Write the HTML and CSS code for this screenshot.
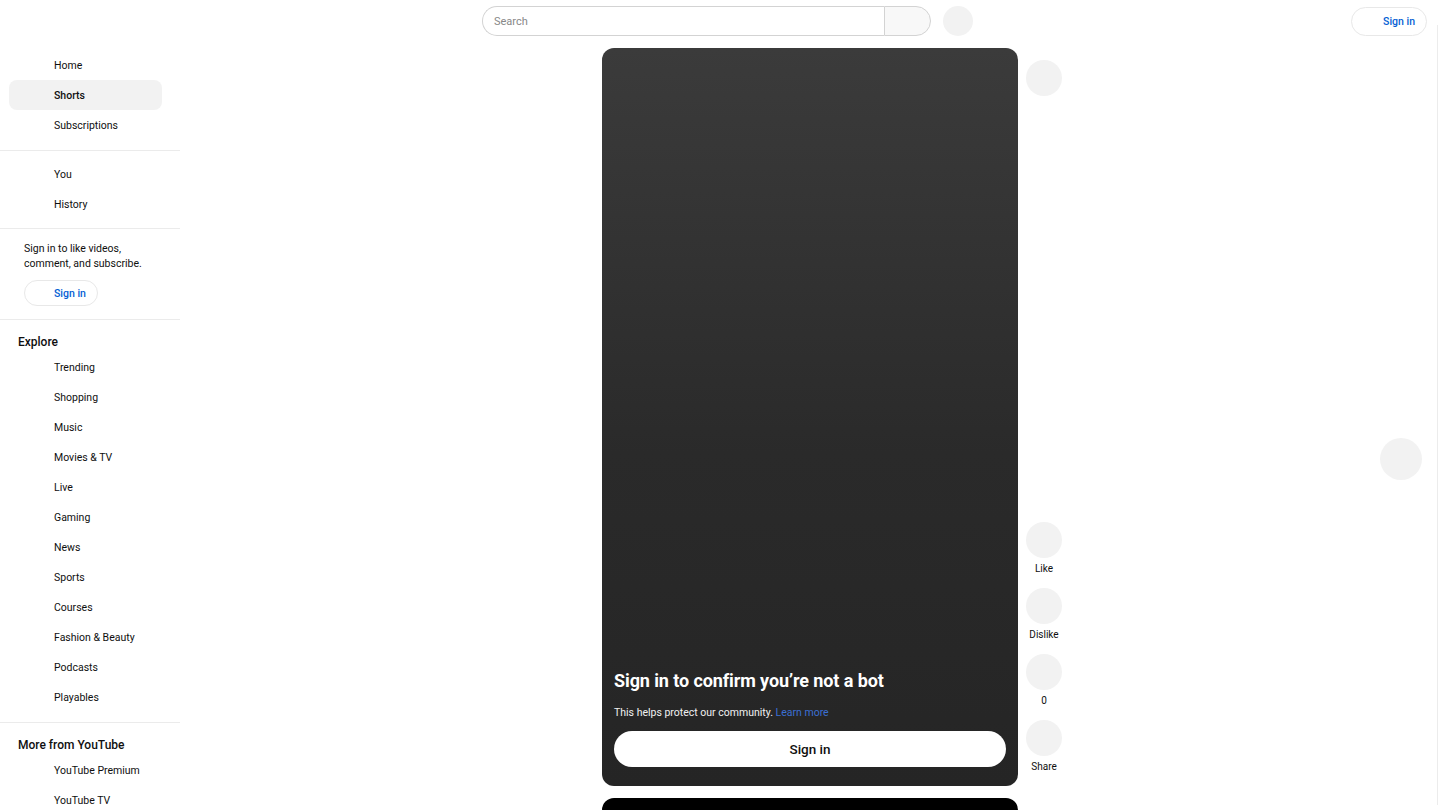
FILE: index.html
```html
<!DOCTYPE html>
<html lang="en">
<head>
  <meta charset="UTF-8" />
  <meta name="viewport" content="width=device-width, initial-scale=1" />
  <title>Shorts</title>
  <link rel="stylesheet" href="styles.css">
</head>
<body>
  <header class="topbar">
    <div class="topbar-start"></div>
    <div class="topbar-center">
      <div class="search">
        <input type="text" class="search-input" placeholder="Search" />
        <button class="search-btn" aria-label="Search"></button>
      </div>
      <button class="mic-btn" aria-label="Search with your voice"></button>
    </div>
    <div class="topbar-end">
      <button class="signin-btn">Sign in</button>
    </div>
  </header>

  <div class="layout">
    <nav class="sidebar">
      <div class="side-section first">
        <a class="side-item">Home</a>
        <a class="side-item active">Shorts</a>
        <a class="side-item">Subscriptions</a>
      </div>
      <div class="side-section">
        <a class="side-item">You</a>
        <a class="side-item">History</a>
      </div>
      <div class="side-section side-signin">
        <p>Sign in to like videos, comment, and subscribe.</p>
        <button class="signin-btn small">Sign in</button>
      </div>
      <div class="side-section explore">
        <h3 class="side-title">Explore</h3>
        <a class="side-item">Trending</a>
        <a class="side-item">Shopping</a>
        <a class="side-item">Music</a>
        <a class="side-item">Movies &amp; TV</a>
        <a class="side-item">Live</a>
        <a class="side-item">Gaming</a>
        <a class="side-item">News</a>
        <a class="side-item">Sports</a>
        <a class="side-item">Courses</a>
        <a class="side-item">Fashion &amp; Beauty</a>
        <a class="side-item">Podcasts</a>
        <a class="side-item">Playables</a>
      </div>
      <div class="side-section last">
        <h3 class="side-title">More from YouTube</h3>
        <a class="side-item">YouTube Premium</a>
        <a class="side-item">YouTube TV</a>
      </div>
    </nav>

    <main class="shorts">
      <div class="reel">
        <div class="reel-card">
          <div class="bot-check">
            <h2>Sign in to confirm you’re not a bot</h2>
            <p>This helps protect our community. <a href="#">Learn more</a></p>
            <button class="bot-signin">Sign in</button>
          </div>
        </div>
        <div class="actions">
          <div class="action">
            <span class="circle"></span>
          </div>
          <div class="action-group">
            <div class="action"><span class="circle"></span><span class="label">Like</span></div>
            <div class="action"><span class="circle"></span><span class="label">Dislike</span></div>
            <div class="action"><span class="circle"></span><span class="label">0</span></div>
            <div class="action"><span class="circle"></span><span class="label">Share</span></div>
          </div>
        </div>
      </div>
      <div class="reel">
        <div class="reel-card next"></div>
        <div class="actions"></div>
      </div>
      <button class="nav-btn" aria-label="Next video"></button>
    </main>
  </div>
  <div class="scrollbar"></div>
</body>
</html>
```

FILE: styles.css
```css
* {
  box-sizing: border-box;
}

body {
  margin: 0;
  font-family: Roboto, 'Liberation Sans', sans-serif;
  font-size: 10.5px;
  color: #0f0f0f;
  background: #fff;
  height: 810px;
  overflow: hidden;
}

button {
  font-family: inherit;
  cursor: pointer;
}

/* Barra superior */
.topbar {
  height: 42px;
  display: flex;
  align-items: center;
}

.topbar-start {
  width: 482px;
  flex: none;
}

.topbar-center {
  display: flex;
  align-items: center;
  gap: 12px;
}

.search {
  display: flex;
  height: 30px;
}

.search-input {
  width: 402px;
  height: 30px;
  border: 1px solid #d3d3d3;
  border-right: none;
  border-radius: 15px 0 0 15px;
  padding: 0 11px;
  font-family: inherit;
  font-size: 11px;
  color: #0f0f0f;
  outline: none;
}

.search-input::placeholder {
  color: #888;
}

.search-btn {
  width: 47px;
  height: 30px;
  border: 1px solid #d3d3d3;
  background: #f8f8f8;
  border-radius: 0 15px 15px 0;
}

.mic-btn {
  width: 30px;
  height: 30px;
  border: none;
  border-radius: 50%;
  background: #f2f2f2;
}

.topbar-end {
  margin-left: auto;
  padding-right: 13px;
}

.signin-btn {
  height: 29px;
  padding: 0 11px 0 31px;
  border: 1px solid #e8e8e8;
  border-radius: 15px;
  background: #fff;
  color: #065fd4;
  font-size: 10.5px;
  font-weight: 500;
}

.signin-btn.small {
  height: 26px;
  padding: 0 11px 0 29px;
}

.layout {
  display: flex;
  position: relative;
}

/* Menu lateral */
.sidebar {
  width: 180px;
  flex: none;
}

.side-section {
  padding: 8px 0 9px;
  border-bottom: 1px solid #ebebeb;
}

.side-section.first {
  padding-bottom: 10px;
}

.side-section.explore {
  padding-bottom: 10px;
}

.side-section.last {
  border-bottom: none;
}

.side-item {
  display: flex;
  align-items: center;
  height: 30px;
  margin: 0 18px 0 9px;
  padding-left: 45px;
  border-radius: 8px;
  font-size: 10.5px;
  color: #0f0f0f;
}

.side-item.active {
  background: #f2f2f2;
  font-weight: 500;
}

.side-signin {
  padding: 12px 0 13px 24px;
}

.side-signin p {
  margin: 0 0 9px;
  width: 130px;
  line-height: 15px;
  font-size: 10.5px;
}

.side-title {
  margin: 0;
  height: 24px;
  display: flex;
  align-items: center;
  padding: 4px 0 0 18px;
  font-size: 12px;
  font-weight: 500;
}

/* Shorts */
.shorts {
  flex: 1;
  display: flex;
  flex-direction: column;
  align-items: center;
  gap: 12px;
  padding-top: 6px;
  padding-left: 44px;
  position: relative;
}

.reel {
  display: flex;
  gap: 8px;
}

.reel-card {
  width: 416px;
  height: 738px;
  border-radius: 12px;
  background: linear-gradient(180deg, #3b3b3b 0%, #2a2a2a 55%, #252525 100%);
  display: flex;
  flex-direction: column;
  justify-content: flex-end;
}

.reel-card.next {
  background: #000;
}

.bot-check {
  padding: 0 12px 19px;
  color: #fff;
}

.bot-check h2 {
  margin: 0 0 15px;
  font-size: 18px;
  font-weight: 700;
  letter-spacing: -0.1px;
}

.bot-check p {
  margin: 0 0 12px;
  font-size: 10.5px;
  color: #f1f1f1;
}

.bot-check a {
  color: #3b6fd2;
  text-decoration: none;
}

.bot-signin {
  width: 100%;
  height: 36px;
  border: none;
  border-radius: 18px;
  background: #fff;
  color: #0f0f0f;
  font-size: 13.5px;
  font-weight: 500;
}

.actions {
  width: 36px;
  display: flex;
  flex-direction: column;
  justify-content: space-between;
  padding: 12px 0 12px;
}

.action-group {
  display: flex;
  flex-direction: column;
  gap: 12px;
}

.action {
  display: flex;
  flex-direction: column;
  align-items: center;
}

.circle {
  width: 36px;
  height: 36px;
  border-radius: 50%;
  background: #f2f2f2;
}

.label {
  margin-top: 4px;
  height: 14px;
  line-height: 14px;
  font-size: 10px;
  white-space: nowrap;
}

.nav-btn {
  position: absolute;
  top: 396px;
  right: 18px;
  width: 42px;
  height: 42px;
  border: none;
  border-radius: 50%;
  background: #f2f2f2;
}

.scrollbar {
  position: fixed;
  top: 25px;
  right: 2px;
  width: 1px;
  height: 780px;
  background: #ececec;
}
```
